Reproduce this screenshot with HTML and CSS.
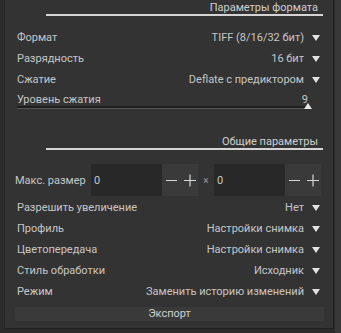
FILE: index.html
```html
<!DOCTYPE html>
<html lang="ru">
<head>
  <meta charset="UTF-8">
  <title>Экспорт</title>
  <link rel="stylesheet" href="styles.css">
</head>
<body>
<div class="frame">
  <div class="panel">
    <div class="section-head">Параметры формата</div>

    <div class="rows first">
      <div class="row">
        <span class="label">Формат</span>
        <span class="value">TIFF (8/16/32 бит)</span>
        <span class="arrow"></span>
      </div>
      <div class="row">
        <span class="label">Разрядность</span>
        <span class="value">16 бит</span>
        <span class="arrow"></span>
      </div>
      <div class="row">
        <span class="label">Сжатие</span>
        <span class="value">Deflate с предиктором</span>
        <span class="arrow"></span>
      </div>
      <div class="slider">
        <div class="slider-top">
          <span class="label">Уровень сжатия</span>
          <span class="slider-val">9</span>
        </div>
        <div class="slider-track"><span class="slider-mark"></span></div>
      </div>
    </div>

    <div class="section-head second">Общие параметры</div>

    <div class="size-row">
      <span class="size-label">Макс. размер</span>
      <div class="spin">
        <span class="spin-field">0</span>
        <span class="spin-btns">
          <svg width="36" height="32" viewBox="0 0 36 32"><path d="M4 16.5h11M22 16.5h12M28 10.5v12" stroke="#d6d6d6" stroke-width="1.2" fill="none"/></svg>
        </span>
      </div>
      <span class="times">×</span>
      <div class="spin">
        <span class="spin-field">0</span>
        <span class="spin-btns">
          <svg width="36" height="32" viewBox="0 0 36 32"><path d="M4 16.5h11M22 16.5h12M28 10.5v12" stroke="#d6d6d6" stroke-width="1.2" fill="none"/></svg>
        </span>
      </div>
    </div>

    <div class="rows">
      <div class="row">
        <span class="label">Разрешить увеличение</span>
        <span class="value">Нет</span>
        <span class="arrow"></span>
      </div>
      <div class="row">
        <span class="label">Профиль</span>
        <span class="value">Настройки снимка</span>
        <span class="arrow"></span>
      </div>
      <div class="row">
        <span class="label">Цветопередача</span>
        <span class="value">Настройки снимка</span>
        <span class="arrow"></span>
      </div>
      <div class="row">
        <span class="label">Стиль обработки</span>
        <span class="value">Исходник</span>
        <span class="arrow"></span>
      </div>
      <div class="row">
        <span class="label">Режим</span>
        <span class="value">Заменить историю изменений</span>
        <span class="arrow"></span>
      </div>
    </div>

    <div class="export-btn">Экспорт</div>
  </div>
</div>
</body>
</html>
```

FILE: styles.css
```css
body {
  margin: 0;
  background-color: #2b2b2b;
  color: #c6c6c6;
  font-family: Roboto, "Noto Sans", sans-serif;
  font-size: 11px;
  overflow: hidden;
}
.frame {
  width: 341px;
  height: 333px;
  display: flex;
  background: linear-gradient(to right, #2b2b2b 0, #2b2b2b 335px, #383838 335px);
}
.panel {
  width: 330px;
  height: 329px;
  margin-left: 4px;
  box-sizing: border-box;
  background-color: #333333;
  border-left: 1px solid #262626;
  border-right: 1px solid #1f1f1f;
  border-bottom: 1px solid #1f1f1f;
  padding: 0 10px 0 12px;
  display: flex;
  flex-direction: column;
}
.section-head {
  height: 14px;
  line-height: 16px;
  margin-left: 29px;
  text-align: right;
  padding-right: 5px;
  border-bottom: 2px solid #d4d4d4;
  color: #cfcfcf;
}
.section-head.second {
  margin-top: 23px;
}
.rows.first {
  margin-top: 11px;
}
.rows {
  display: flex;
  flex-direction: column;
  margin-top: 1px;
}
.row {
  height: 21px;
  display: flex;
  align-items: center;
}
.label {
  flex: 1;
}
.value {
  text-align: right;
}
.arrow {
  width: 0;
  height: 0;
  margin-left: 8px;
  margin-right: 3px;
  border-left: 4px solid transparent;
  border-right: 4px solid transparent;
  border-top: 6px solid #e2e2e2;
}
.slider {
  height: 21px;
  display: flex;
  flex-direction: column;
}
.slider-top {
  height: 16px;
  display: flex;
  align-items: flex-end;
  padding-right: 15px;
}
.slider-val {
  text-align: right;
}
.slider-track {
  position: relative;
  height: 2px;
  margin-top: 0;
  margin-right: 15px;
  background-color: #1e1e1e;
  border-bottom: 1px solid #555;
}
.slider-mark {
  position: absolute;
  right: -4px;
  top: -3px;
  width: 0;
  height: 0;
  border-left: 4px solid transparent;
  border-right: 4px solid transparent;
  border-bottom: 6px solid #e6e6e6;
}
.size-row {
  margin-top: 14px;
  display: flex;
  align-items: center;
  height: 32px;
}
.size-label {
  width: 76px;
  margin-left: -2px;
}
.spin {
  display: flex;
  height: 32px;
}
.spin-field {
  width: 68px;
  background-color: #282828;
  padding-left: 3px;
  display: flex;
  align-items: center;
}
.spin-btns {
  width: 36px;
  background-color: #3a3a3a;
  display: flex;
}
.times {
  width: 16px;
  text-align: center;
  color: #9a9a9a;
  font-size: 10px;
}
.export-btn {
  margin-top: 5px;
  margin-left: -2px;
  margin-right: -1px;
  height: 14px;
  line-height: 14px;
  text-align: center;
  background-color: #3a3a3a;
  color: #cfcfcf;
}
```
